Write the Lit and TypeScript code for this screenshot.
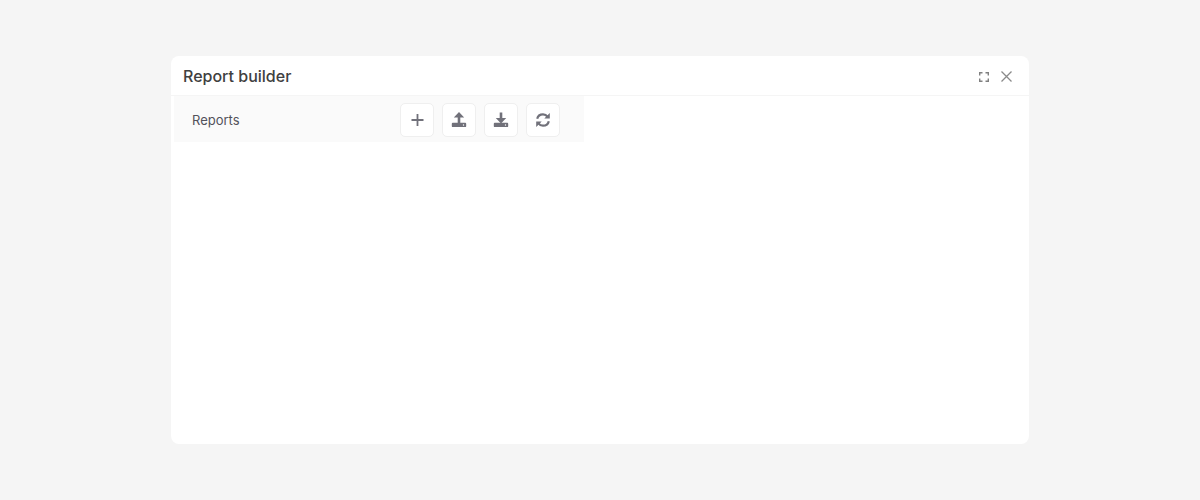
import { css, html, LitElement } from 'lit';
import { customElement } from 'lit/decorators.js';

@customElement('app-root')
export class AppRoot extends LitElement {
  static override styles = css`
    :host {
      display: block;
      height: 500px;
      background: #f5f5f5;
      font-family: Inter, 'Liberation Sans', sans-serif;
      box-sizing: border-box;
      padding: 56px 171px;
    }

    .dialog {
      height: 388px;
      background: #fff;
      border-radius: 8px;
      display: flex;
      flex-direction: column;
    }

    .head {
      height: 40px;
      box-sizing: border-box;
      flex: none;
      display: flex;
      align-items: center;
      justify-content: space-between;
      padding: 0 16px 0 12px;
      border-bottom: 1px solid #f5f5f5;
    }

    .title {
      font-size: 16px;
      font-weight: 500;
      color: #404040;
    }

    .actions {
      display: flex;
      align-items: center;
      gap: 10px;
      margin-top: 2px;
    }

    .actions svg {
      display: block;
    }

    .body {
      padding: 0 3px;
    }

    .panel {
      width: 410px;
      height: 46px;
      box-sizing: border-box;
      background: #fafafa;
      display: flex;
      align-items: center;
      justify-content: space-between;
      padding: 2px 24px 0 18px;
    }

    .label {
      font-size: 13px;
      color: #52525b;
    }

    .tools {
      display: flex;
      gap: 8px;
    }

    .tool {
      width: 34px;
      height: 34px;
      box-sizing: border-box;
      padding: 0;
      background: #fff;
      border: 1px solid #efefef;
      border-radius: 5px;
      display: flex;
      align-items: center;
      justify-content: center;
    }
  `;

  override render() {
    return html`
      <div class="dialog">
        <div class="head">
          <span class="title">Report builder</span>
          <div class="actions">
            <svg width="12" height="12" viewBox="0 0 12 12" fill="none" stroke="#808080" stroke-width="1.4">
              <path d="M1.700 4.500V1.700H4.500M7.500 1.700h2.800V4.500M10.300 7.500v2.800H7.500M4.500 10.300H1.700V7.500" />
            </svg>
            <svg width="13" height="13" viewBox="0 0 13 13" fill="none" stroke="#8a8a8a" stroke-width="1.3">
              <path d="M1.500 1.500l10 10M11.500 1.500l-10 10" />
            </svg>
          </div>
        </div>
        <div class="body">
          <div class="panel">
            <span class="label">Reports</span>
            <div class="tools">
              <button class="tool">
                <svg width="16" height="16" viewBox="0 0 16 16" fill="none" stroke="#71717a" stroke-width="1.800">
                  <path d="M8.500 2v12M2.500 8h12" />
                </svg>
              </button>
              <button class="tool">
                <svg width="16" height="16" viewBox="0 0 16 16" fill="#71717a">
                  <path d="M8 0L13.200 5.500H9.300V11H6.700V5.500H2.800z" />
                  <path fill-rule="evenodd" d="M1.700 10.800h12.600c.5 0 .9.400.9.900v2.500c0 .5-.4.900-.9.900H1.700c-.5 0-.9-.4-.9-.9v-2.500c0-.5.4-.9.900-.9zM12.500 12.300a.7.7 0 1 0 0 1.400a.7.7 0 1 0 0-1.400z" />
                </svg>
              </button>
              <button class="tool">
                <svg width="16" height="16" viewBox="0 0 16 16" fill="#71717a">
                  <path d="M6.700 .5h2.600V6h3.900L8 11.500 2.800 6h3.900z" />
                  <path fill-rule="evenodd" d="M1.700 10.800h12.600c.5 0 .9.400.9.900v2.500c0 .5-.4.900-.9.900H1.700c-.5 0-.9-.4-.9-.9v-2.500c0-.5.4-.9.900-.9zM12.500 12.300a.7.7 0 1 0 0 1.400a.7.7 0 1 0 0-1.400z" />
                </svg>
              </button>
              <button class="tool">
                <svg width="16" height="16" viewBox="0 0 16 16" fill="none" stroke="#71717a" stroke-width="2.200">
                  <path d="M2.200 6.800C2.800 4 5 2.300 8 2.300c2 0 3.500.9 4.500 2.300M13.800 9.200c-.6 2.800-2.800 4.500-5.800 4.500-2 0-3.500-.9-4.500-2.300" />
                  <path d="M14.800 1v5.500H9.300zM1.200 15V9.500h5.500z" fill="#71717a" stroke="none" />
                </svg>
              </button>
            </div>
          </div>
        </div>
      </div>
    `;
  }
}
